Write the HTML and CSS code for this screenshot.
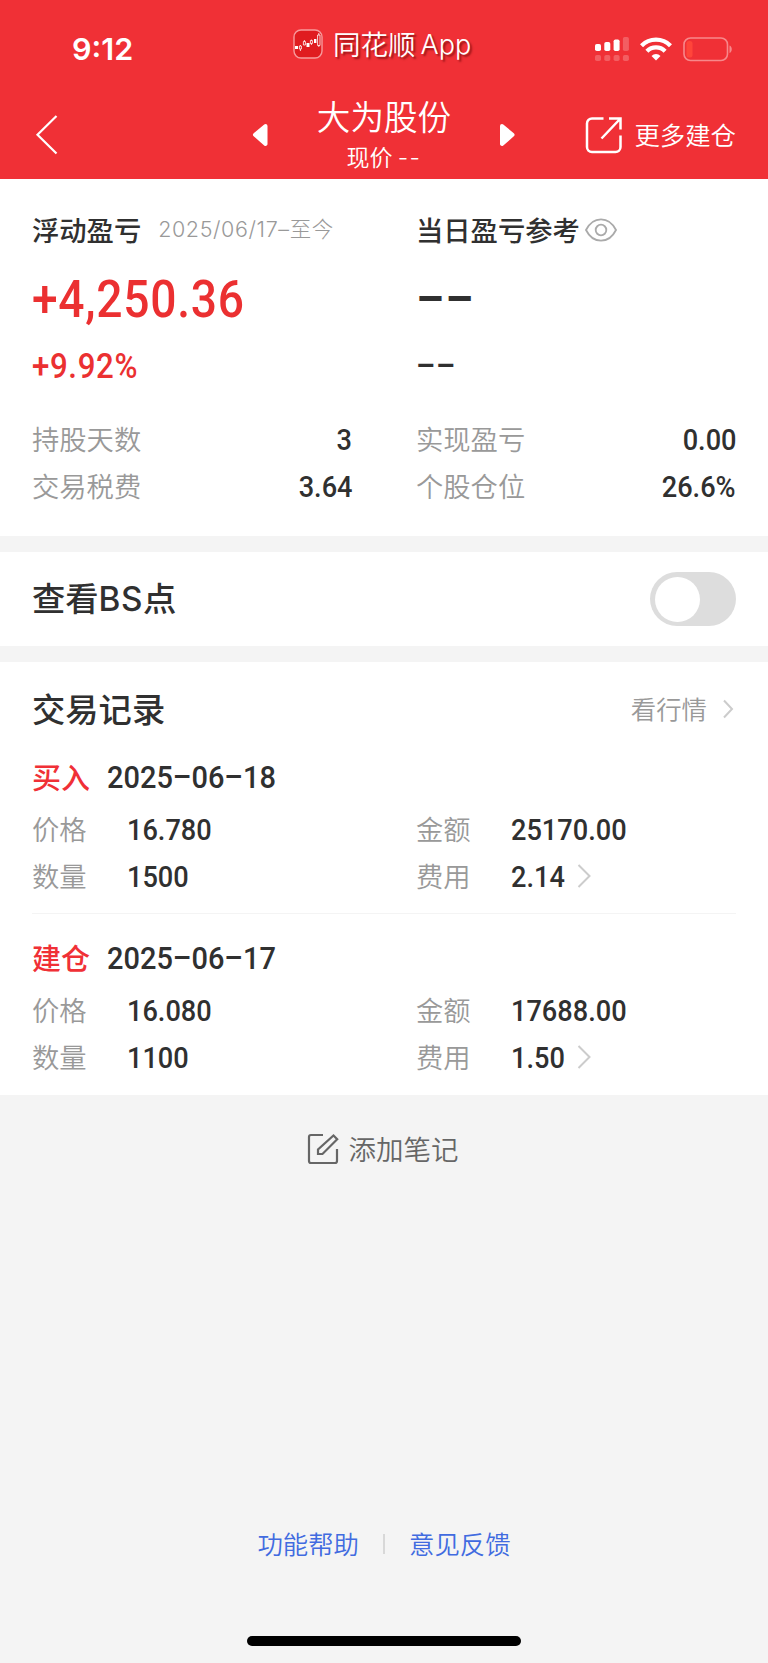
FILE: index.html
```html
<!DOCTYPE html>
<html lang="zh-CN">
<head>
  <meta charset="UTF-8">
  <meta name="viewport" content="width=device-width, initial-scale=1.0">
  <title>大为股份</title>
  <link rel="stylesheet" href="styles.css">
</head>
<body>

<header class="header">
  <div class="status-bar">
    <span class="clock">9:12</span>
    <div class="app-name">
      <svg class="app-logo" width="30" height="30" viewBox="0 0 30 30">
        <rect x="1" y="1" width="28" height="28" rx="7" fill="#e01c20" stroke="#f79a9c" stroke-width="1.4"/>
        <g fill="#fff">
          <rect x="2" y="17" width="3" height="3"/>
          <rect x="13.5" y="14" width="3" height="4"/>
          <rect x="21" y="10" width="2.4" height="4"/>
        </g>
        <g fill="none" stroke="#fff" stroke-width=".8">
          <path d="M7.4 16v1M6.4 17h2v3h-2zM7.4 20v2M11.4 11v1.5M10.4 12.5h2V16h-2zM18.4 10.5v1M17.4 11.5h2v3h-2zM18.4 14.5V16M25.8 4v2M24.6 6H27v10.5h-2.4zM25.8 16.5V18"/>
        </g>
      </svg>
      <span>同花顺</span><span class="app-latin">App</span>
    </div>
    <div class="status-icons">
      <svg width="34" height="25" viewBox="0 0 34 25" fill="#fff">
        <rect x="0" y="7" width="6" height="7" rx="1.8"/>
        <rect x="9.3" y="5" width="6" height="9" rx="1.8"/>
        <rect x="18.6" y="2.5" width="6" height="11.5" rx="1.8"/>
        <g opacity=".22">
          <rect x="27.9" y="0" width="6" height="14" rx="1.8"/>
          <rect x="0" y="18" width="6" height="6" rx="1.8"/>
          <rect x="9.3" y="18" width="6" height="6" rx="1.8"/>
          <rect x="18.6" y="18" width="6" height="6" rx="1.8"/>
          <rect x="27.9" y="18" width="6" height="6" rx="1.8"/>
        </g>
      </svg>
      <svg class="wifi" width="32" height="25" viewBox="0 0 32 25">
        <g fill="none" stroke="#fff" stroke-width="4.3">
          <path d="M1.5 8.700a20.500 20.500 0 0 1 29 0"/>
          <path d="M6.900 14.200a12.900 12.900 0 0 1 18.200 0"/>
        </g>
        <path d="M16 23.500l-4.500-4.600a6.400 6.400 0 0 1 9 0z" fill="#fff"/>
      </svg>
      <svg class="battery" width="50" height="25" viewBox="0 0 50 25">
        <rect x="1" y="1" width="43.5" height="22.5" rx="6.5" fill="none" stroke="#f7888b" stroke-width="1.6"/>
        <rect x="3.5" y="4" width="6" height="16.5" rx="2.5" fill="#ff453a"/>
        <path d="M46.500 8.500c3 1 3 6.500 0 7.500z" fill="#f7888b"/>
      </svg>
    </div>
  </div>

  <nav class="nav-bar">
    <svg class="back" width="24" height="42" viewBox="0 0 24 42">
      <path d="M22.500 2L3.500 20.800l19 18.700" fill="none" stroke="#fff" stroke-width="2.2"/>
    </svg>
    <div class="stock">
      <svg width="18" height="24" viewBox="0 0 18 24">
        <path d="M14.500 3L4 11.800 14.500 21z" fill="#fff" stroke="#fff" stroke-width="4" stroke-linejoin="round"/>
      </svg>
      <div class="stock-text">
        <h1>大为股份</h1>
        <p>现价 <span class="dashes">--</span></p>
      </div>
      <svg width="18" height="24" viewBox="0 0 18 24">
        <path d="M3 3l10.500 8.800L3 21z" fill="#fff" stroke="#fff" stroke-width="4" stroke-linejoin="round"/>
      </svg>
    </div>
    <a class="more">
      <svg width="38" height="38" viewBox="0 0 38 38" fill="none" stroke="#fff" stroke-width="2.5">
        <path d="M18.500 2.500H7A5 5 0 0 0 2 7.500V31a5 5 0 0 0 5 5h23.500a5 5 0 0 0 5-5V19.500"/>
        <path d="M24 2.500h11.500V13.500M35 3L16.500 22.500"/>
      </svg>
      <span>更多建仓</span>
    </a>
  </nav>
</header>

<section class="summary">
  <div class="summary-col">
    <div class="summary-title">浮动盈亏<span class="period">2025/06/17–至今</span></div>
    <div class="amount up">+4,250.36</div>
    <div class="percent up">+9.92%</div>
    <div class="stat"><span class="label">持股天数</span><span class="num">3</span></div>
    <div class="stat"><span class="label">交易税费</span><span class="num">3.64</span></div>
  </div>
  <div class="summary-col">
    <div class="summary-title">当日盈亏参考
      <svg class="eye" width="32" height="24" viewBox="0 0 32 24" fill="none" stroke="#aaa" stroke-width="1.8">
        <path d="M1 12C4.500 5 10 1.300 16 1.300S27.500 5 31 12c-3.500 7-9 10.700-15 10.700S4.500 19 1 12z"/>
        <circle cx="16" cy="12" r="5.3"/>
      </svg>
    </div>
    <div class="amount empty">––</div>
    <div class="percent empty">––</div>
    <div class="stat"><span class="label">实现盈亏</span><span class="num">0.00</span></div>
    <div class="stat"><span class="label">个股仓位</span><span class="num">26.6%</span></div>
  </div>
</section>

<section class="bs-row">
  <h2>查看<span class="latin">BS</span>点</h2>
  <div class="switch"><div class="knob"></div></div>
</section>

<section class="records">
  <div class="records-head">
    <h2>交易记录</h2>
    <a class="quote-link">看行情
      <svg width="12" height="22" viewBox="0 0 12 22"><path d="M2 2.500l8 8.500-8 8.500" fill="none" stroke="#ccc" stroke-width="2"/></svg>
    </a>
  </div>

  <div class="record">
    <div class="record-head"><span class="type">买入</span><span class="date">2025–06–18</span></div>
    <div class="record-grid">
      <div class="cell"><span class="label">价格</span><span class="num">16.780</span></div>
      <div class="cell"><span class="label">金额</span><span class="num">25170.00</span></div>
      <div class="cell"><span class="label">数量</span><span class="num">1500</span></div>
      <div class="cell"><span class="label">费用</span><span class="num">2.14</span>
        <svg class="arrow" width="14" height="26" viewBox="0 0 14 26"><path d="M1.500 1l11 11-11 11" fill="none" stroke="#ccc" stroke-width="2"/></svg>
      </div>
    </div>
  </div>

  <div class="record">
    <div class="record-head"><span class="type">建仓</span><span class="date">2025–06–17</span></div>
    <div class="record-grid">
      <div class="cell"><span class="label">价格</span><span class="num">16.080</span></div>
      <div class="cell"><span class="label">金额</span><span class="num">17688.00</span></div>
      <div class="cell"><span class="label">数量</span><span class="num">1100</span></div>
      <div class="cell"><span class="label">费用</span><span class="num">1.50</span>
        <svg class="arrow" width="14" height="26" viewBox="0 0 14 26"><path d="M1.500 1l11 11-11 11" fill="none" stroke="#ccc" stroke-width="2"/></svg>
      </div>
    </div>
  </div>
</section>

<a class="add-note">
  <svg width="32" height="32" viewBox="0 0 32 32" fill="none" stroke="#666" stroke-width="2.2">
    <path d="M16 2H4a2 2 0 0 0-2 2v24a2 2 0 0 0 2 2h24a2 2 0 0 0 2-2V16"/>
    <path d="M26.500 2.500l3.700 3.700L15.500 21H11v-4.500z"/>
  </svg>
  <span>添加笔记</span>
</a>

<footer class="footer">
  <div class="footer-links">
    <a>功能帮助</a>
    <span class="sep"></span>
    <a>意见反馈</a>
  </div>
  <div class="home-bar"></div>
</footer>

</body>
</html>
```
FILE: styles.css
```css
* {
  box-sizing: border-box;
}
body {
  margin: 0;
  min-height: 1663px;
  display: flex;
  flex-direction: column;
  background: #f4f4f4;
  color: #303030;
  font-family: "Noto Sans CJK SC", sans-serif;
  line-height: 1;
}
h1, h2, p {
  margin: 0;
}
svg {
  display: block;
  flex: none;
}

/* header */
.header {
  height: 179px;
  background: #f03036;
  color: #fff;
}
.status-bar {
  height: 93px;
  display: grid;
  grid-template-columns: 293px 1fr 173px;
  align-items: center;
}
.clock {
  padding-left: 72px;
  padding-top: 5px;
  font: 600 30.5px/1 Inter, sans-serif;
}
.app-name {
  display: flex;
  align-items: center;
  padding-bottom: 5px;
  font-size: 27.5px;
  font-weight: 350;
  text-shadow: 2px 2px 2px rgba(90, 0, 0, .6);
}
.app-logo {
  margin-right: 10px;
}
.app-latin {
  margin-left: 5px;
  font-family: Inter, sans-serif;
  font-size: 27px;
}
.status-icons {
  display: flex;
  align-items: center;
  padding-top: 5px;
}
.wifi {
  margin-left: 11px;
}
.battery {
  margin-left: 11px;
}
.nav-bar {
  height: 84px;
  padding: 0 32px 0 34px;
  display: grid;
  grid-template-columns: 217px 266px 1fr;
  align-items: center;
}
.stock {
  display: flex;
  justify-content: space-between;
  align-items: center;
}
.stock-text {
  text-align: center;
}
.stock h1 {
  font-size: 33.6px;
  font-weight: 350;
  line-height: 44px;
}
.stock p {
  font-size: 23px;
  font-weight: 350;
  line-height: 36px;
}
.dashes {
  font-family: Inter, sans-serif;
  letter-spacing: 1.5px;
}
.more {
  display: flex;
  align-items: center;
  justify-content: flex-end;
  gap: 11px;
  font-size: 25.4px;
  font-weight: 350;
}

/* profit summary */
.summary {
  height: 357px;
  padding: 27px 32px 0;
  display: grid;
  grid-template-columns: 1fr 1fr;
  column-gap: 64px;
  background: #fff;
}
.summary-title {
  display: flex;
  align-items: center;
  height: 48px;
  font-size: 27.3px;
  font-weight: 500;
  white-space: nowrap;
}
.period {
  margin-left: 17px;
  color: #999;
  font-family: Inter, "Noto Sans CJK SC", sans-serif;
  font-size: 21.5px;
  font-weight: 300;
  letter-spacing: 0.6px;
}
.eye {
  margin-left: 5px;
}

/* narrow figures */
.amount, .percent, .num, .date {
  font-family: Roboto, sans-serif;
  font-weight: 500;
  transform: scaleX(.905);
  transform-origin: left;
}
.amount {
  height: 88px;
  line-height: 91px;
  font-size: 51px;
  letter-spacing: 0.8px;
}
.percent {
  height: 48px;
  line-height: 48px;
  font-size: 34.5px;
  letter-spacing: 0.7px;
  margin-bottom: 26px;
}
.amount.empty, .percent.empty {
  transform: scaleX(.87);
}
.up {
  color: #eb3031;
}
.stat {
  height: 47px;
  display: flex;
  align-items: center;
  justify-content: space-between;
}
.stat .num {
  transform-origin: right;
}
.label {
  color: #999;
  font-size: 27.3px;
  font-weight: 350;
  padding-bottom: 2px;
}
.num {
  font-size: 30px;
}

/* BS switch */
.bs-row {
  height: 94px;
  margin: 16px 0;
  padding: 0 32px;
  display: flex;
  align-items: center;
  justify-content: space-between;
  background: #fff;
}
h2 {
  padding-bottom: 2px;
  font-size: 33.3px;
  font-weight: 500;
}
.latin {
  font-family: Inter, sans-serif;
  font-weight: 450;
  letter-spacing: 0.5px;
}
.switch {
  width: 86px;
  height: 54px;
  padding: 4.5px;
  border-radius: 27px;
  background: #ddd;
}
.knob {
  width: 45px;
  height: 45px;
  border-radius: 50%;
  background: #fff;
}

/* trade records */
.records {
  height: 433px;
  padding: 0 32px;
  background: #fff;
}
.records-head {
  height: 94px;
  display: flex;
  align-items: center;
  justify-content: space-between;
}
.quote-link {
  display: flex;
  align-items: center;
  gap: 15px;
  margin-right: 2px;
  color: #999;
  font-size: 25.4px;
  font-weight: 350;
}
.record {
  padding-bottom: 13px;
  border-bottom: 1px solid #f4f4f4;
}
.record + .record {
  padding-top: 23px;
  border-bottom: none;
}
.record-head {
  height: 42px;
  margin-bottom: 8px;
  display: flex;
  align-items: center;
}
.type {
  width: 75px;
  padding-bottom: 2px;
  color: #f03036;
  font-size: 29px;
  font-weight: 500;
}
.date {
  font-size: 32px;
}
.record-grid {
  display: grid;
  grid-template-columns: 384px 1fr;
}
.cell {
  height: 47px;
  display: flex;
  align-items: center;
}
.cell .label {
  width: 95px;
}
.arrow {
  margin-left: 6px;
}

.add-note {
  margin: 38px auto 0;
  padding-right: 3px;
  display: flex;
  align-items: center;
  gap: 10px;
  color: #666;
  font-size: 27.5px;
  font-weight: 350;
}

/* footer */
.footer {
  margin-top: auto;
  padding-bottom: 17px;
}
.footer-links {
  height: 28px;
  margin-bottom: 78px;
  display: flex;
  align-items: center;
  justify-content: center;
  gap: 24px;
  color: #416be0;
  font-size: 25.4px;
  font-weight: 350;
}
.sep {
  width: 2px;
  height: 20px;
  background: #d8d8d8;
}
.home-bar {
  width: 274px;
  height: 10px;
  margin: 0 auto;
  border-radius: 5px;
  background: #000;
}
```
